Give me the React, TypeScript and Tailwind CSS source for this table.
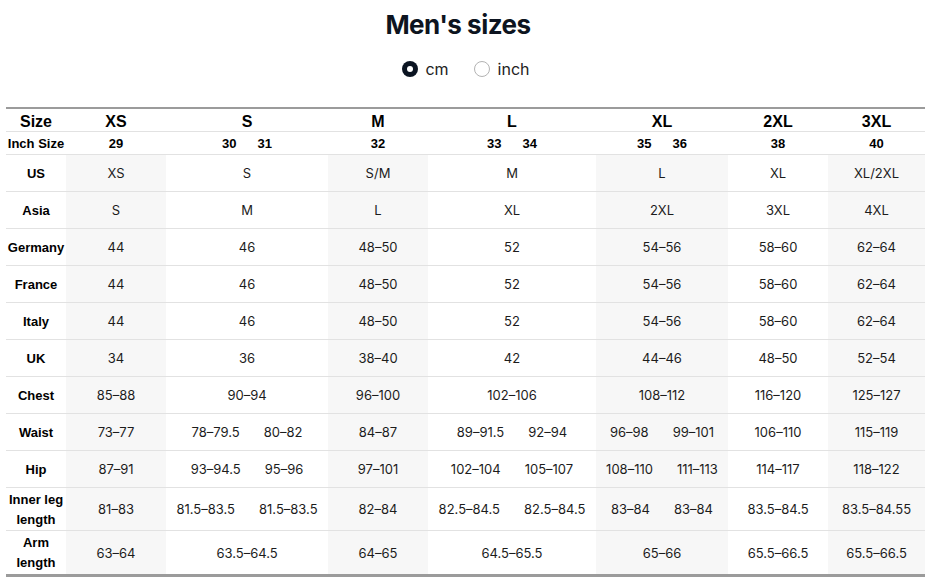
import React from "react";

type Cell = string | string[];

const GRID =
  "grid grid-cols-[60px_100px_162px_100px_168px_132px_100px_97px]";

const heads = ["XS", "S", "M", "L", "XL", "2XL", "3XL"];
const inch: Cell[] = ["29", ["30", "31"], "32", ["33", "34"], ["35", "36"], "38", "40"];

const rows: { label: string; cells: Cell[]; tall?: boolean }[] = [
  { label: "US", cells: ["XS", "S", "S/M", "M", "L", "XL", "XL/2XL"] },
  { label: "Asia", cells: ["S", "M", "L", "XL", "2XL", "3XL", "4XL"] },
  { label: "Germany", cells: ["44", "46", "48–50", "52", "54–56", "58–60", "62–64"] },
  { label: "France", cells: ["44", "46", "48–50", "52", "54–56", "58–60", "62–64"] },
  { label: "Italy", cells: ["44", "46", "48–50", "52", "54–56", "58–60", "62–64"] },
  { label: "UK", cells: ["34", "36", "38–40", "42", "44–46", "48–50", "52–54"] },
  { label: "Chest", cells: ["85–88", "90–94", "96–100", "102–106", "108–112", "116–120", "125–127"] },
  {
    label: "Waist",
    cells: ["73–77", ["78–79.5", "80–82"], "84–87", ["89–91.5", "92–94"], ["96–98", "99–101"], "106–110", "115–119"],
  },
  {
    label: "Hip",
    cells: ["87–91", ["93–94.5", "95–96"], "97–101", ["102–104", "105–107"], ["108–110", "111–113"], "114–117", "118–122"],
  },
  {
    label: "Inner leg length",
    tall: true,
    cells: ["81–83", ["81.5–83.5", "81.5–83.5"], "82–84", ["82.5–84.5", "82.5–84.5"], ["83–84", "83–84"], "83.5–84.5", "83.5–84.55"],
  },
  {
    label: "Arm length",
    tall: true,
    cells: ["63–64", "63.5–64.5", "64–65", "64.5–65.5", "65–66", "65.5–66.5", "65.5–66.5"],
  },
];

const arial = { fontFamily: '"Liberation Sans", Arial, sans-serif' };

function Content({ c, gap }: { c: Cell; gap: string }) {
  if (Array.isArray(c)) {
    return (
      <div className={`flex items-center justify-center ${gap}`}>
        {c.map((v, i) => (
          <span key={i}>{v}</span>
        ))}
      </div>
    );
  }
  return <span>{c}</span>;
}

export default function App() {
  return (
    <div
      className="w-[926px] h-[586px] bg-white text-[#1c1c1c] overflow-hidden"
      style={{ fontFamily: 'Inter, "Noto Sans", sans-serif' }}
    >
      <div className="pt-[9px] pr-[10px] h-[41px] text-center text-[26px] leading-[32px] font-bold text-[#0d1420] tracking-[-0.5px]">
        Men's sizes
      </div>
      <div className="mt-[20px] pl-[6px] h-[16px] flex items-center justify-center text-[16px] text-[#222]">
        <div className="flex items-center gap-[7px]">
          <span className="w-[16px] h-[16px] rounded-full bg-[#0b1422] flex items-center justify-center">
            <span className="w-[6px] h-[6px] rounded-full bg-white" />
          </span>
          <span>cm</span>
        </div>
        <div className="flex items-center gap-[8px] ml-[25px]">
          <span className="w-[16px] h-[16px] rounded-full border border-[#b3b3b3] bg-white" />
          <span>inch</span>
        </div>
      </div>

      <div className="mt-[30px] ml-[6px] w-[919px] border-t-2 border-b-[3px] border-[#9b9b9b]">
        {/* Size header */}
        <div className={`${GRID} h-[23px] border-b border-[#e2e2e2] font-bold text-[16px] text-black`} style={arial}>
          <div className="flex items-center justify-center pt-[1px]">Size</div>
          {heads.map((h) => (
            <div key={h} className="flex items-center justify-center pt-[1px]">
              {h}
            </div>
          ))}
        </div>
        {/* Inch header */}
        <div className={`${GRID} h-[23px] border-b border-[#e2e2e2] font-bold text-[13px] text-black`} style={arial}>
          <div className="flex items-center justify-center whitespace-nowrap pt-[1px]">Inch Size</div>
          {inch.map((c, i) => (
            <div key={i} className="flex items-center justify-center pt-[1px]">
              <Content c={c} gap="gap-[21px]" />
            </div>
          ))}
        </div>
        {rows.map((r, ri) => (
          <div
            key={r.label}
            className={`${GRID} ${r.tall ? "h-[43px]" : "h-[37px]"} ${
              ri === rows.length - 1 ? "" : "border-b border-[#e2e2e2]"
            } text-[13px]`}
          >
            <div
              className="flex items-center justify-center text-center font-bold text-[13px] leading-[20px] text-black pt-[1px]"
              style={arial}
            >
              {r.label}
            </div>
            {r.cells.map((c, i) => (
              <div
                key={i}
                className={`flex items-center justify-center pt-[2px] ${i % 2 === 0 ? "bg-[#f7f7f7]" : "bg-white"}`}
              >
                <Content c={c} gap="gap-[24px]" />
              </div>
            ))}
          </div>
        ))}
      </div>
    </div>
  );
}
